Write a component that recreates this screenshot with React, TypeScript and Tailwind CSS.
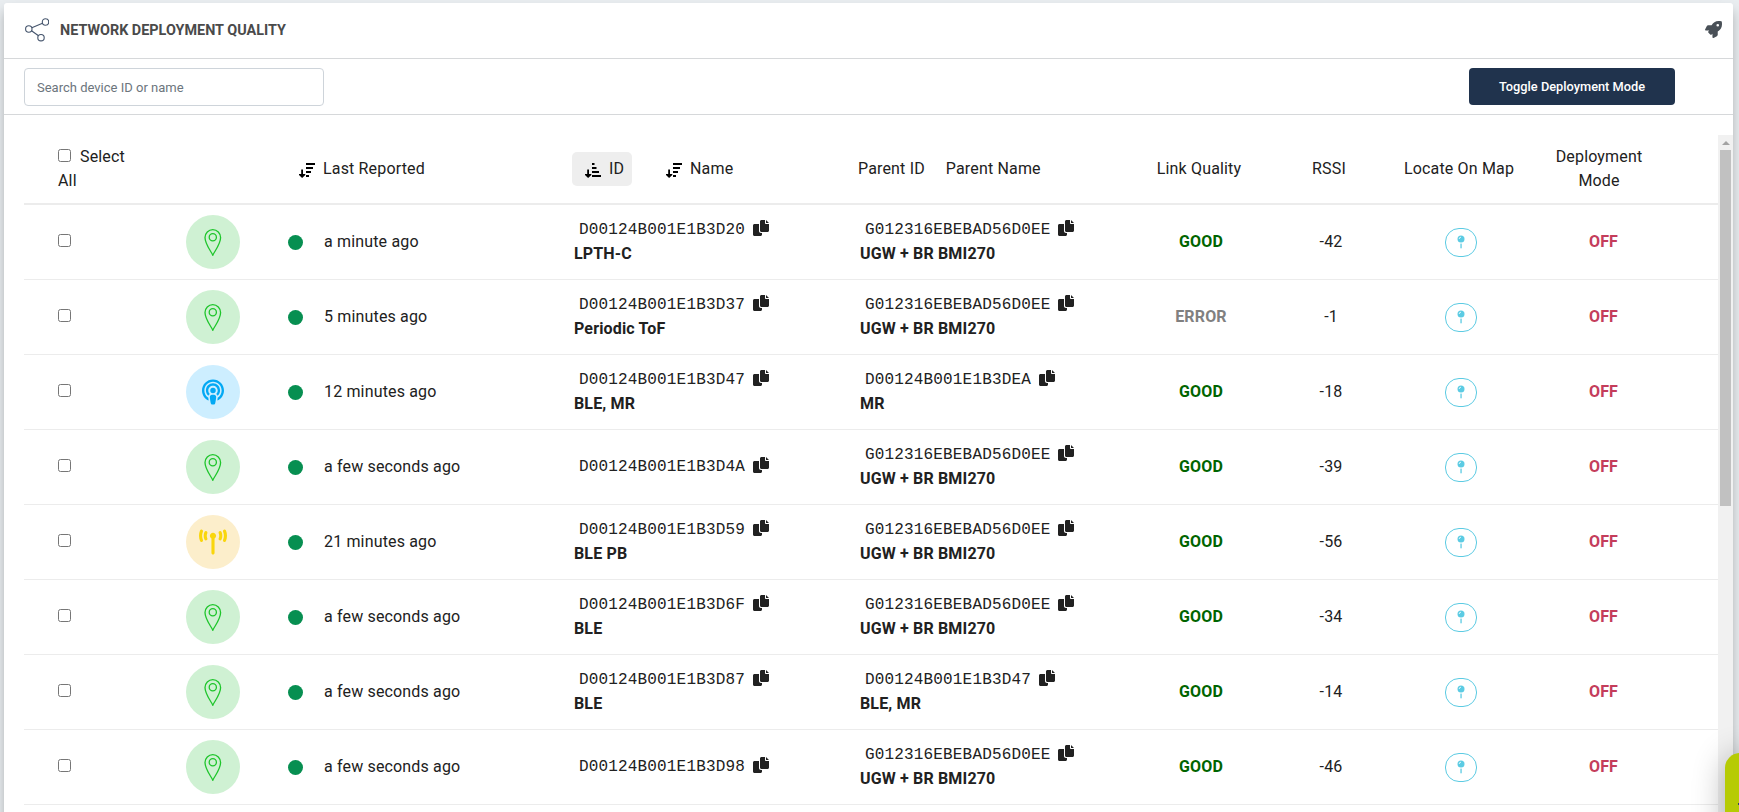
import React from "react";
import { FaPodcast, FaTowerBroadcast } from "react-icons/fa6";
import { FaRocket } from "react-icons/fa";

type Kind = "pin" | "podcast" | "tower";
interface Device {
  kind: Kind;
  seen: string;
  id: string;
  name?: string;
  parentId: string;
  parentName: string;
  quality: "GOOD" | "ERROR";
  rssi: number;
}

const UGW = { parentId: "G012316EBEBAD56D0EE", parentName: "UGW + BR BMI270" };
const DEVICES: Device[] = [
  { kind: "pin", seen: "a minute ago", id: "D00124B001E1B3D20", name: "LPTH-C", ...UGW, quality: "GOOD", rssi: -42 },
  { kind: "pin", seen: "5 minutes ago", id: "D00124B001E1B3D37", name: "Periodic ToF", ...UGW, quality: "ERROR", rssi: -1 },
  { kind: "podcast", seen: "12 minutes ago", id: "D00124B001E1B3D47", name: "BLE, MR", parentId: "D00124B001E1B3DEA", parentName: "MR", quality: "GOOD", rssi: -18 },
  { kind: "pin", seen: "a few seconds ago", id: "D00124B001E1B3D4A", ...UGW, quality: "GOOD", rssi: -39 },
  { kind: "tower", seen: "21 minutes ago", id: "D00124B001E1B3D59", name: "BLE PB", ...UGW, quality: "GOOD", rssi: -56 },
  { kind: "pin", seen: "a few seconds ago", id: "D00124B001E1B3D6F", name: "BLE", ...UGW, quality: "GOOD", rssi: -34 },
  { kind: "pin", seen: "a few seconds ago", id: "D00124B001E1B3D87", name: "BLE", parentId: "D00124B001E1B3D47", parentName: "BLE, MR", quality: "GOOD", rssi: -14 },
  { kind: "pin", seen: "a few seconds ago", id: "D00124B001E1B3D98", ...UGW, quality: "GOOD", rssi: -46 },
];

const COLS = "grid grid-cols-[162px_102px_285px_286px_275.5px_129px_130px_130px_194.5px]";

function CopyIcon() {
  return (
    <svg viewBox="0 0 512 512" className="size-4 shrink-0 fill-[#212121]">
      <path d="M384 96V0H272c-26.5 0-48 21.5-48 48v288c0 26.5 21.5 48 48 48h192c26.5 0 48-21.500 48-48V128h-95.100C398.400 128 384 113.600 384 96zM416 0v96h96L416 0zM192 352V128H48c-26.500 0-48 21.500-48 48v288c0 26.500 21.500 48 48 48h192c26.500 0 48-21.500 48-48v-48h-32c-35.300 0-64-28.700-64-64z" />
    </svg>
  );
}

function SortIcon({ up = false }: { up?: boolean }) {
  const widths = up ? [2.5, 4.5, 7, 9] : [9, 7, 5, 3];
  return (
    <svg viewBox="0 0 16 16" className="mt-px size-4 shrink-0 fill-black">
      <path d="M2.200 7.500h1.800V12h2.300v1L3.100 16 0 13v-1h2.200z" />
      {widths.map((w, i) => (
        <rect key={i} x="7" y={1 + i * 4} width={w} height="2" />
      ))}
    </svg>
  );
}

function MapPin() {
  return (
    <svg viewBox="0 0 8 14" className="h-[14px] w-2">
      <circle cx="4" cy="4" r="3.500" fill="#5bcbe3" />
      <path d="M2.200 4a1.800 1.800 0 0 1 1.800-1.800" fill="none" stroke="#fff" strokeWidth="0.800" />
      <rect x="3.400" y="8.600" width="1.300" height="4.700" fill="#5bcbe3" />
    </svg>
  );
}

function DeviceIcon({ kind }: { kind: Kind }) {
  if (kind === "podcast")
    return (
      <span className="flex size-[54px] items-center justify-center rounded-full bg-[#cdeeff] text-[#03a9f4]">
        <FaPodcast className="h-[26px] w-[22px]" />
      </span>
    );
  if (kind === "tower")
    return (
      <span className="flex size-[54px] items-center justify-center rounded-full bg-[#fceecb] text-[#f9d60c]">
        <FaTowerBroadcast className="h-[26px] w-[28px]" />
      </span>
    );
  return (
    <span className="flex size-[54px] items-center justify-center rounded-full bg-[#cff1d3]">
      <svg viewBox="-0.3 0 18 27" className="h-[27px] w-[18px]" fill="none" stroke="#1ec52b" strokeWidth="1.300">
        <path d="M8.500 26.200C7 22.500.700 15.500.700 8.600a7.800 7.900 0 0 1 15.600 0c0 6.900-6.300 13.900-7.800 17.600z" />
        <circle cx="8.500" cy="8.300" r="3.600" />
      </svg>
    </span>
  );
}

function IdBlock({ id, name }: { id: string; name?: string }) {
  return (
    <div className="flex flex-col pl-px">
      <div className="flex h-6 items-center pl-[5px]">
        <span className="w-max font-['Liberation_Mono',monospace] text-base leading-6">{id}</span>
        <span className="ml-2 pb-1">
          <CopyIcon />
        </span>
      </div>
      {name && <b className="h-6 leading-6 font-bold">{name}</b>}
    </div>
  );
}

export default function App() {
  return (
    <div className="relative h-[812px] w-full overflow-hidden bg-[#e9edf0] pt-[3px] pr-[6px] pl-1 font-[Roboto,sans-serif] text-base text-[#212121]">
      <main className="flex h-[820px] flex-col rounded-t-[3px] bg-white shadow-[0_8px_12px_rgba(0,0,0,0.25)]">
        <header className="flex h-14 items-center border-b border-[#d6d8da] pr-[11px] pb-[2px] pl-[21px]">
          <svg viewBox="0 0 24 24" className="size-6" fill="none" stroke="#44546c" strokeWidth="1.100">
            <circle cx="3.800" cy="11" r="3.200" />
            <circle cx="20.500" cy="4" r="3.200" />
            <circle cx="16" cy="19.700" r="3.200" />
            <path d="M6.800 9.800l10.700-4.500M6.500 12.800l7 5" />
          </svg>
          <h1 className="mt-[2px] ml-[11px] text-[14.4px] leading-5 font-bold text-[#4a4a4a]">NETWORK DEPLOYMENT QUALITY</h1>
          <FaRocket className="ml-auto size-[17px] text-[#495057]" />
        </header>
        <div className="flex h-14 items-start justify-between border-b border-[#d6d8da] pt-[9px] pr-[58px] pl-5">
          <input
            className="h-[38px] w-[300px] rounded-[4px] border border-[#ced4da] px-3 text-[13px] placeholder:text-[#6c757d]"
            placeholder="Search device ID or name"
          />
          <button className="h-[37px] w-[206px] rounded-[4px] bg-[#20334d] text-[12.8px] font-medium text-white">
            Toggle Deployment Mode
          </button>
        </div>
        <div className="mt-5 flex min-h-0 flex-1 pl-5 tracking-[0.16px]">
          <div className="min-w-0 flex-1 overflow-hidden">
            <div className={`${COLS} h-[70px] items-center border-b-2 border-[#ececec]`}>
              <div className="w-[110px] pl-[34px] leading-6">
                <input type="checkbox" className="m-0 mr-[9px] inline-block size-[13px]" />
                Select All
              </div>
              <div />
              <div className="flex items-center gap-2 pl-[11px]">
                <SortIcon />
                Last Reported
              </div>
              <div className="-ml-px flex items-center">
                <div className="flex h-[34px] w-[60px] items-center gap-2 rounded-[5px] bg-[#eee] pl-[13px]">
                  <SortIcon up />
                  ID
                </div>
                <div className="ml-[34px] flex items-center gap-2">
                  <SortIcon />
                  Name
                </div>
              </div>
              <div className="-ml-px flex gap-[21px]">
                <span>Parent ID</span>
                <span>Parent Name</span>
              </div>
              <div className="text-center whitespace-nowrap">Link Quality</div>
              <div className="pl-px text-center">RSSI</div>
              <div className="pl-px text-center whitespace-nowrap">Locate On Map</div>
              <div className="w-[151px] px-6 text-center leading-6">Deployment Mode</div>
            </div>
            {DEVICES.map((d) => (
              <div key={d.id} className={`${COLS} h-[75px] items-center border-b border-[#ececec]`}>
                <div className="pb-[3px] pl-[34px]">
                  <input type="checkbox" className="m-0 block size-[13px]" />
                </div>
                <DeviceIcon kind={d.kind} />
                <div className="flex items-center">
                  <span className="mt-px size-[15px] rounded-full bg-[#078f51]" />
                  <span className="ml-[21px]">{d.seen}</span>
                </div>
                <IdBlock id={d.id} name={d.name} />
                <IdBlock id={d.parentId} name={d.parentName} />
                <div className={`pl-1 text-center font-bold ${d.quality === "GOOD" ? "text-[#006400]" : "text-[#808080]"}`}>{d.quality}</div>
                <div className="pl-[5px] text-center">{d.rssi}</div>
                <div className="flex justify-center pl-[5px]">
                  <span className="mt-px flex h-[29px] w-8 items-center justify-center rounded-[14px] border border-[#5bcbe3] pb-[2px]">
                    <MapPin />
                  </span>
                </div>
                <div className="w-[160px] text-center font-bold text-[#c43d5b]">OFF</div>
              </div>
            ))}
          </div>
          <div className="flex w-[15px] flex-col items-center bg-[#f1f1f1]">
            <div className="flex h-[15px] items-center justify-center">
              <svg viewBox="0 0 8 4" className="h-1 w-2 fill-[#a3a3a3]">
                <path d="M0 4L4 0l4 4z" />
              </svg>
            </div>
            <div className="h-[356px] w-[11px] bg-[#c1c1c1]" />
          </div>
        </div>
      </main>
      <div className="absolute top-[753px] left-[1725px] h-[120px] w-[60px] rounded-[15px] bg-[#b6cb04] shadow-[0_4px_32px_rgba(0,0,0,0.3)]">
        <div className="mt-[50px] ml-[13px] h-[2px] w-8 bg-[#33475b]" />
      </div>
    </div>
  );
}
